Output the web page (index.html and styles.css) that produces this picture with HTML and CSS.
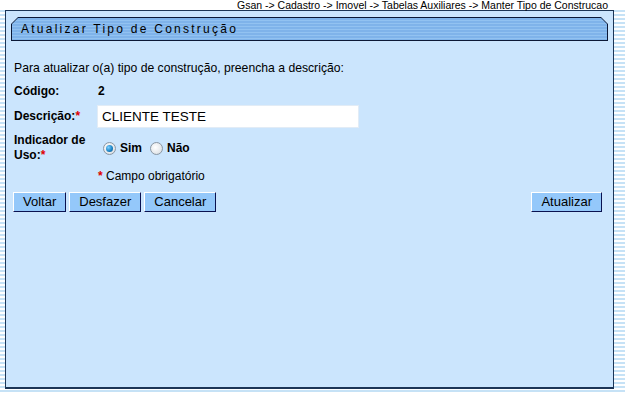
FILE: index.html
```html
<!DOCTYPE html>
<html lang="pt">
<head>
<meta charset="utf-8">
<link rel="stylesheet" href="styles.css">
</head>
<body>
<div class="crumb">Gsan -&gt; Cadastro -&gt; Imovel -&gt; Tabelas Auxiliares -&gt; Manter Tipo de Construcao</div>
<div class="panel">
  <div class="head"><div class="head-in">Atualizar Tipo de Construção</div></div>
  <p class="intro">Para atualizar o(a) tipo de construção, preencha a descrição:</p>
  <div class="row r-cod"><span class="lbl">Código:</span><span class="val">2</span></div>
  <div class="row r-desc"><span class="lbl">Descrição:<i class="req">*</i></span><div class="input">CLIENTE TESTE</div></div>
  <div class="row r-ind">
    <span class="lbl">Indicador de<br>Uso:<i class="req">*</i></span>
    <div class="radios">
      <span class="radio on"></span><span class="rl">Sim</span>
      <span class="radio"></span><span class="rl">Não</span>
    </div>
  </div>
  <div class="row r-obr"><span class="lbl"></span><span class="obr"><i class="req">*</i> Campo obrigatório</span></div>
  <div class="btns">
    <span class="btn">Voltar</span>
    <span class="btn">Desfazer</span>
    <span class="btn">Cancelar</span>
    <span class="spacer"></span>
    <span class="btn">Atualizar</span>
  </div>
</div>
</body>
</html>
```
FILE: styles.css
```css
html, body {
  margin: 0;
  padding: 0;
}
body {
  width: 625px;
  height: 394px;
  overflow: hidden;
  background: repeating-linear-gradient(to bottom, #ffffff 0, #ffffff 2px, #c6e2f6 2px, #c6e2f6 4px);
  font-family: "Liberation Sans", Arial, sans-serif;
  font-size: 12px;
  color: #000;
}
.crumb {
  height: 10px;
  line-height: 10px;
  font-size: 10.5px;
  text-align: right;
  padding-right: 17px;
  color: #000;
  background: #fff;
  width: 608px;
}
.panel {
  margin-left: 5px;
  width: 607px;
  height: 376px;
  background: #cbe5fd;
  border: 1px solid #1c3556;
  border-bottom-width: 2px;
  display: flex;
  flex-direction: column;
}
.head {
  margin: 6px 0 0 5px;
  width: 597px;
  height: 24px;
  background: #0b1836;
  padding: 1px;
  box-sizing: border-box;
  clip-path: polygon(7px 0, calc(100% - 7px) 0, 100% 7px, 100% 100%, 0 100%, 0 7px);
}
.head-in {
  height: 100%;
  background: repeating-linear-gradient(to bottom, #7fb3ea 0, #7fb3ea 2px, #92c2f1 2px, #92c2f1 3px);
  clip-path: polygon(6px 0, calc(100% - 6px) 0, 100% 6px, 100% 100%, 0 100%, 0 6px);
  font-size: 12px;
  letter-spacing: 2.25px;
  line-height: 23px;
  padding-left: 9px;
  color: #000;
}
.intro {
  margin: 20px 0 0 8px;
  line-height: 14px;
  font-size: 12.2px;
}
.row {
  display: flex;
  align-items: center;
  margin-left: 8px;
}
.lbl {
  width: 84px;
  flex: none;
  font-weight: bold;
  line-height: 15px;
}
.req {
  color: #e00000;
  font-style: normal;
  font-weight: bold;
}
.val {
  font-weight: bold;
}
.r-cod {
  margin-top: 8px;
  height: 16px;
}
.r-desc {
  margin-top: 6px;
}
.input {
  width: 256px;
  height: 21px;
  background: #fff;
  border: 1px solid #e2ecf6;
  font-size: 13.5px;
  line-height: 21px;
  padding-left: 4px;
  margin-left: -1px;
}
.r-ind {
  margin-top: 5px;
}
.radios {
  display: flex;
  align-items: center;
  margin-left: 5px;
}
.radio {
  width: 11px;
  height: 11px;
  border-radius: 50%;
  border: 1px solid #8a97a4;
  background: radial-gradient(circle at 40% 40%, #ffffff 0, #e6e9ec 60%, #c9ced4 100%);
  position: relative;
}
.radio.on::after {
  content: "";
  position: absolute;
  left: 2px;
  top: 2px;
  width: 7px;
  height: 7px;
  border-radius: 50%;
  background: radial-gradient(circle at 35% 35%, #7fd0ff 0, #1d86c8 55%, #0c4f86 100%);
}
.rl {
  font-weight: bold;
  margin: 0 8px 0 4px;
}
.r-obr {
  margin-top: 6px;
}
.obr {
  line-height: 15px;
}
.btns {
  display: flex;
  margin: 8px 11px 0 7px;
  gap: 3px;
}
.spacer {
  flex: 1;
}
.btn {
  height: 18px;
  line-height: 18px;
  padding: 0 9px;
  background: #94c8fa;
  border: 1px solid;
  border-color: #ffffff #0a1250 #0a1250 #ffffff;
  font-size: 13px;
}
```
